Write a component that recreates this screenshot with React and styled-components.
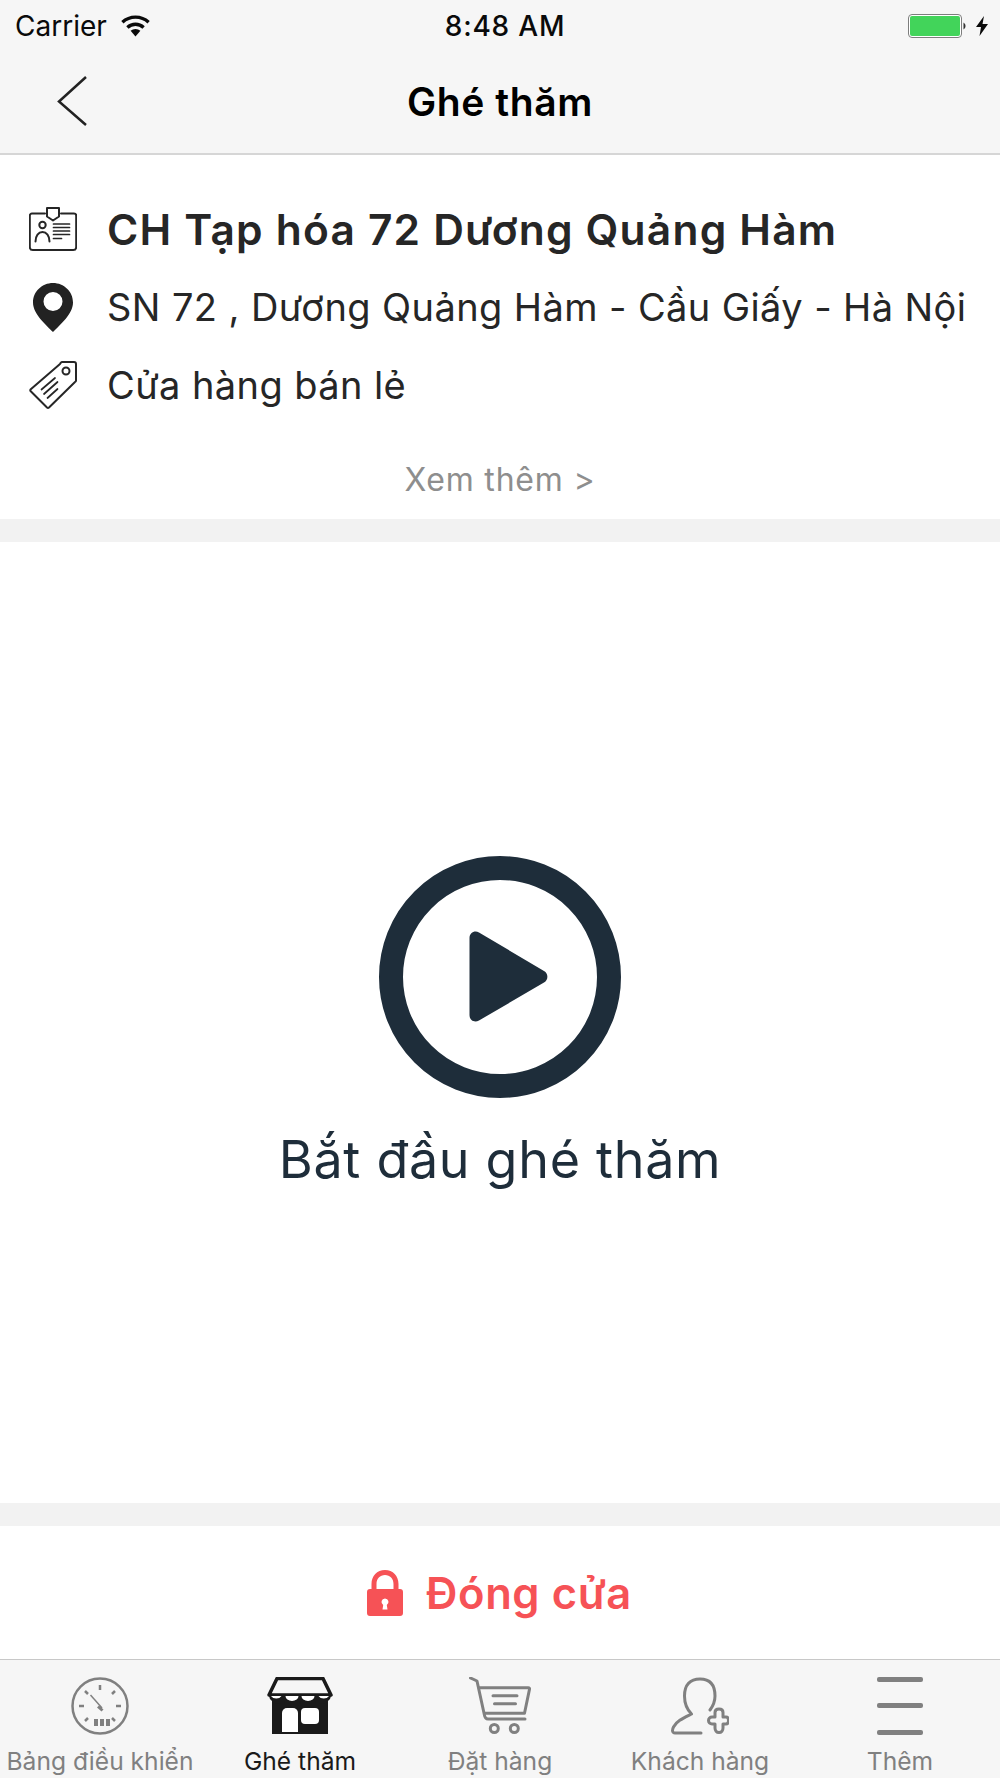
import React from "react";
import styled, { createGlobalStyle } from "styled-components";

const GlobalStyle = createGlobalStyle`
  html, body { margin: 0; padding: 0; background: #fff; }
  body { font-family: Inter, "Noto Sans", sans-serif; color: #262626; }
`;

const Screen = styled.div`
  width: 1000px;
  height: 1778px;
  display: flex;
  flex-direction: column;
  overflow: hidden;
  background: #f2f2f2;
`;

const TopBar = styled.header`
  height: 153px;
  background: #f6f6f6;
  border-bottom: 2px solid #d6d6d6;
  display: flex;
  flex-direction: column;
`;

const StatusBar = styled.div`
  height: 52px;
  padding: 0 12px 0 15px;
  display: grid;
  grid-template-columns: 1fr auto 1fr;
  align-items: center;
  font-size: 28px;
  color: #0a0a0a;
`;

const StatusLeft = styled.div`
  display: flex;
  align-items: center;
  gap: 13px;
`;

const StatusTime = styled.span`
  margin-left: 7px;
  font-weight: 500;
  letter-spacing: 0.8px;
`;

const StatusRight = styled.div`
  display: flex;
  align-items: center;
  justify-content: flex-end;
  gap: 10px;
`;

const NavBar = styled.div`
  flex: 1;
  margin-top: -3px;
  display: flex;
  align-items: center;
  justify-content: center;
  position: relative;
`;

const BackIcon = styled.svg`
  position: absolute;
  left: 57px;
  top: 26px;
`;

const NavTitle = styled.h1`
  margin: 0;
  font-size: 39px;
  font-weight: 600;
  letter-spacing: 0.6px;
  color: #000;
`;

const InfoCard = styled.section`
  height: 364px;
  background: #fff;
  padding-top: 35px;
  box-sizing: border-box;
  display: flex;
  flex-direction: column;
`;

const InfoRow = styled.div`
  height: 78px;
  display: flex;
  align-items: center;
  padding-left: 29px;
  white-space: nowrap;
`;

const RowIcon = styled.span`
  width: 48px;
  margin-right: 30px;
  display: flex;
  justify-content: center;
`;

const ShopName = styled.div`
  font-size: 42.5px;
  font-weight: 600;
  letter-spacing: 1.2px;
  color: #262626;
`;

const InfoText = styled.div`
  font-size: 38px;
  letter-spacing: 0.4px;
  color: #262626;
`;

const MoreLink = styled.div`
  margin-top: 36px;
  text-align: center;
  font-size: 32px;
  letter-spacing: 0.8px;
  color: #8e8e8e;
`;

const VisitArea = styled.main`
  height: 961px;
  margin-top: 23px;
  background: #fff;
  display: flex;
  flex-direction: column;
  align-items: center;
  padding-top: 314px;
  box-sizing: border-box;
`;

const VisitLabel = styled.div`
  margin-top: 30px;
  font-size: 52px;
  letter-spacing: 0.7px;
  color: #1e2d3a;
`;

const CloseBar = styled.div`
  height: 133px;
  margin-top: 23px;
  padding-right: 1px;
  background: #fff;
  display: flex;
  align-items: center;
  justify-content: center;
  gap: 23px;
`;

const CloseLabel = styled.span`
  font-size: 43.5px;
  font-weight: 600;
  letter-spacing: 0.6px;
  color: #f65256;
`;

const TabBar = styled.nav`
  height: 118px;
  background: #f6f6f6;
  border-top: 1px solid #c8c8c8;
  display: grid;
  grid-template-columns: repeat(5, 200px);
`;

const Tab = styled.div`
  display: flex;
  flex-direction: column;
  align-items: center;
  padding-top: 17px;
  font-size: 24.6px;
  white-space: nowrap;
  color: ${(p) => (p.$active ? "#1a1a1a" : "#808080")};
`;

const TabIcon = styled.div`
  height: 58px;
  margin-bottom: 11px;
  display: flex;
  align-items: center;
`;

const Wifi = () => (
  <svg width="31" height="22" viewBox="0 0 31 22">
    <path d="M15.500 21.500 10.600 15.800a7.400 7.400 0 0 1 9.800 0Z" fill="#0a0a0a" />
    <path d="M7.400 12.400a12 12 0 0 1 16.200 0M2.400 7.200a19.400 19.400 0 0 1 26.200 0" fill="none" stroke="#0a0a0a" strokeWidth="3.400" />
  </svg>
);

const Battery = () => (
  <svg width="58" height="24" viewBox="0 0 58 24">
    <rect x="0.500" y="0.500" width="53" height="23" rx="3.500" fill="#fff" stroke="#7d7d7d" />
    <rect x="2" y="2" width="50" height="20" rx="2" fill="#42d45a" />
    <path d="M55.500 8.500a4 4 0 0 1 0 7Z" fill="#333" />
  </svg>
);

const Bolt = () => (
  <svg width="12" height="20" viewBox="0 0 12 20">
    <path d="M8 0 0 11h5l-1.500 9L12 8H6.500Z" fill="#0a0a0a" />
  </svg>
);

const IdCardIcon = () => (
  <svg width="48" height="44" viewBox="0 0 48 44" fill="none" stroke="#262626" strokeWidth="2" strokeLinecap="round" strokeLinejoin="round">
    <path d="M16 6.500H3a2.200 2.200 0 0 0-2.200 2.200v31.500A3 3 0 0 0 3.800 43h40.400a3 3 0 0 0 3-2.800V8.700A2.200 2.200 0 0 0 45 6.500H32" />
    <path d="M18 1h12v8.500l-6 4-6-4Z" />
    <circle cx="13.500" cy="18" r="3.200" />
    <path d="M6.500 34.500c0-5.500 3-9.500 7-9.500s7 4 7 9.500" />
    <path d="M24.500 17h16M24.500 20.500h16M24.500 24h16M24.500 27.500h16M24.500 31.500h8" strokeWidth="1.700" />
  </svg>
);

const PinIcon = () => (
  <svg width="40" height="49" viewBox="0 0 40 49">
    <path fillRule="evenodd" fill="#222" d="M20 0c11 0 20 8.500 20 19.500C40 31 27 42 20 49 13 42 0 31 0 19.500 0 8.500 9 0 20 0Zm0 9a9.500 9.500 0 1 0 0 19 9.500 9.500 0 0 0 0-19Z" />
  </svg>
);

const TagIcon = () => (
  <svg width="48" height="48" viewBox="0 0 48 48" fill="none" stroke="#262626" strokeWidth="2" strokeLinecap="round" strokeLinejoin="round">
    <path d="M31 3 1.500 28.500a1.500 1.500 0 0 0 0 1.500L18 46.500a1.500 1.500 0 0 0 2 0L46 21a2 2 0 0 0 1-2V3a2 2 0 0 0-2-2H33a3 3 0 0 0-2 2Z" />
    <circle cx="37" cy="10" r="3.500" />
    <path d="M12.500 28.500 26 17M15 33l13.500-12M18.500 37 28.500 28" strokeWidth="1.700" />
  </svg>
);

const PlayIcon = () => (
  <svg width="242" height="242" viewBox="0 0 242 242">
    <circle cx="121" cy="121" r="109" fill="none" stroke="#1e2d3a" strokeWidth="24" />
    <path d="M90.500 82c0-5 5-8 9.500-5.500L165 115c4.500 2.500 4.500 9 0 11.500L100 164.500c-4.500 2.500-9.500 0-9.500-5.500Z" fill="#1e2d3a" />
  </svg>
);

const LockIcon = () => (
  <svg width="36" height="46" viewBox="0 0 36 46">
    <path fillRule="evenodd" fill="#f65256" d="M18 0c8 0 13.500 6 13.500 14v5H33a3 3 0 0 1 3 3v21a3 3 0 0 1-3 3H3a3 3 0 0 1-3-3V22a3 3 0 0 1 3-3h1.500v-5C4.500 6 10 0 18 0Zm0 5c-5 0-8.500 3.500-8.500 9v5h17v-5c0-5.500-3.500-9-8.500-9Zm0 23.500a3.500 3.500 0 0 0-1.800 6.500l-.7 4.500h5l-.7-4.500a3.500 3.500 0 0 0-1.800-6.500Z" />
  </svg>
);

const GaugeIcon = () => (
  <svg width="58" height="58" viewBox="0 0 58 58" fill="none" stroke="#808080" strokeWidth="2.500">
    <circle cx="29" cy="29" r="27.500" />
    <path d="M29 8v5M44 14l-3 3M50 29h-5M44 44l-3-3M8 29h5M14 14l3 3M14 44l3-3" />
    <path d="M19.500 18 31 31" strokeWidth="1.500" />
    <path d="M27 29.500 31.500 33.500" strokeWidth="3" />
    <path d="M23 42h4v7h-4ZM29 42h4v7h-4ZM35 42h4v7h-4Z" fill="#808080" stroke="none" />
  </svg>
);

const StoreIcon = () => (
  <svg width="66" height="58" viewBox="0 0 66 58">
    <path d="M10 1.500h46l8 16.500H2Z" fill="#f6f6f6" stroke="#1a1a1a" strokeWidth="3.500" strokeLinejoin="round" />
    <path d="M5 20h56v37H5Z" fill="#1a1a1a" />
    <path d="M2 17h62v2a7 7 0 0 1-3 5 8 8 0 0 1-12 0 8 8 0 0 1-16 0 8 8 0 0 1-16 0 8 8 0 0 1-12 0 7 7 0 0 1-3-5Z" fill="#1a1a1a" />
    <path d="M4 19h10.500a6 5 0 0 1-10.500 0ZM18.500 19h13a6.500 5 0 0 1-13 0ZM34.500 19h13a6.500 5 0 0 1-13 0ZM51.500 19H62a6 5 0 0 1-10.500 0Z" fill="#fff" />
    <path d="M15 55V36a5 5 0 0 1 5-5h6a5 5 0 0 1 5 5v19Z" fill="#fff" />
    <rect x="34" y="31" width="18" height="16" rx="4" fill="#fff" />
  </svg>
);

const CartIcon = () => (
  <svg width="63" height="58" viewBox="0 0 63 58" fill="none" stroke="#808080" strokeWidth="3" strokeLinecap="round" strokeLinejoin="round">
    <path d="M1.500 1 8 4l7.300 33.500q.7 4.500 3.700 4.500h37" />
    <path d="M10.300 10.700h49q1.500 0 1.200 1.500l-5 24H16.300" />
    <path d="M24 18.700h24M25.500 26.700h21" />
    <circle cx="25.300" cy="51.500" r="4" />
    <circle cx="45.300" cy="51.500" r="4" />
  </svg>
);

const UserPlusIcon = () => (
  <svg width="58" height="58" viewBox="0 0 58 58" fill="none" stroke="#808080" strokeWidth="3" strokeLinecap="round" strokeLinejoin="round">
    <path d="M30 56H4c-3 0-3-3-1.500-6 3-6 10-9 18-13-5-5-7-11-7-18C13.500 8 19 2 29 2s15 6 15 17c0 5-2 10-5 14" />
    <path d="M44 35.500c0-2 1.500-3.500 4-3.500s4 1.500 4 3.500v4.500h3c1.500 0 2.500 1.500 2.500 3.500s-1 3.500-2.500 3.500h-3v4c0 2.500-1.500 4.500-4 4.500s-4-2-4-4.500v-4h-3c-2 0-3.500-1.500-3.500-3.500s1.500-3.500 3.500-3.500h3Z" />
  </svg>
);

const MenuIcon = () => (
  <svg width="46" height="58" viewBox="0 0 46 58" fill="#808080">
    <rect y="0" width="46" height="5" rx="2" />
    <rect y="26" width="46" height="5" rx="2" />
    <rect y="53" width="46" height="5" rx="2" />
  </svg>
);

const tabs = [
  { label: "Bảng điều khiển", Icon: GaugeIcon },
  { label: "Ghé thăm", Icon: StoreIcon, active: true },
  { label: "Đặt hàng", Icon: CartIcon },
  { label: "Khách hàng", Icon: UserPlusIcon },
  { label: "Thêm", Icon: MenuIcon },
];

export default function App() {
  return (
    <Screen>
      <GlobalStyle />
      <TopBar>
        <StatusBar>
          <StatusLeft>Carrier <Wifi /></StatusLeft>
          <StatusTime>8:48 AM</StatusTime>
          <StatusRight><Battery /><Bolt /></StatusRight>
        </StatusBar>
        <NavBar>
          <BackIcon width="30" height="52" viewBox="0 0 30 52" fill="none" stroke="#222" strokeWidth="2.500">
            <path d="M29 2 2 26.500 29 50" />
          </BackIcon>
          <NavTitle>Ghé thăm</NavTitle>
        </NavBar>
      </TopBar>

      <InfoCard>
        <InfoRow>
          <RowIcon><IdCardIcon /></RowIcon>
          <ShopName>CH Tạp hóa 72 Dương Quảng Hàm</ShopName>
        </InfoRow>
        <InfoRow>
          <RowIcon><PinIcon /></RowIcon>
          <InfoText>SN 72 , Dương Quảng Hàm - Cầu Giấy - Hà Nội</InfoText>
        </InfoRow>
        <InfoRow>
          <RowIcon><TagIcon /></RowIcon>
          <InfoText>Cửa hàng bán lẻ</InfoText>
        </InfoRow>
        <MoreLink>Xem thêm &gt;</MoreLink>
      </InfoCard>

      <VisitArea>
        <PlayIcon />
        <VisitLabel>Bắt đầu ghé thăm</VisitLabel>
      </VisitArea>

      <CloseBar>
        <LockIcon />
        <CloseLabel>Đóng cửa</CloseLabel>
      </CloseBar>

      <TabBar>
        {tabs.map(({ label, Icon, active }) => (
          <Tab key={label} $active={active}>
            <TabIcon><Icon /></TabIcon>
            {label}
          </Tab>
        ))}
      </TabBar>
    </Screen>
  );
}
